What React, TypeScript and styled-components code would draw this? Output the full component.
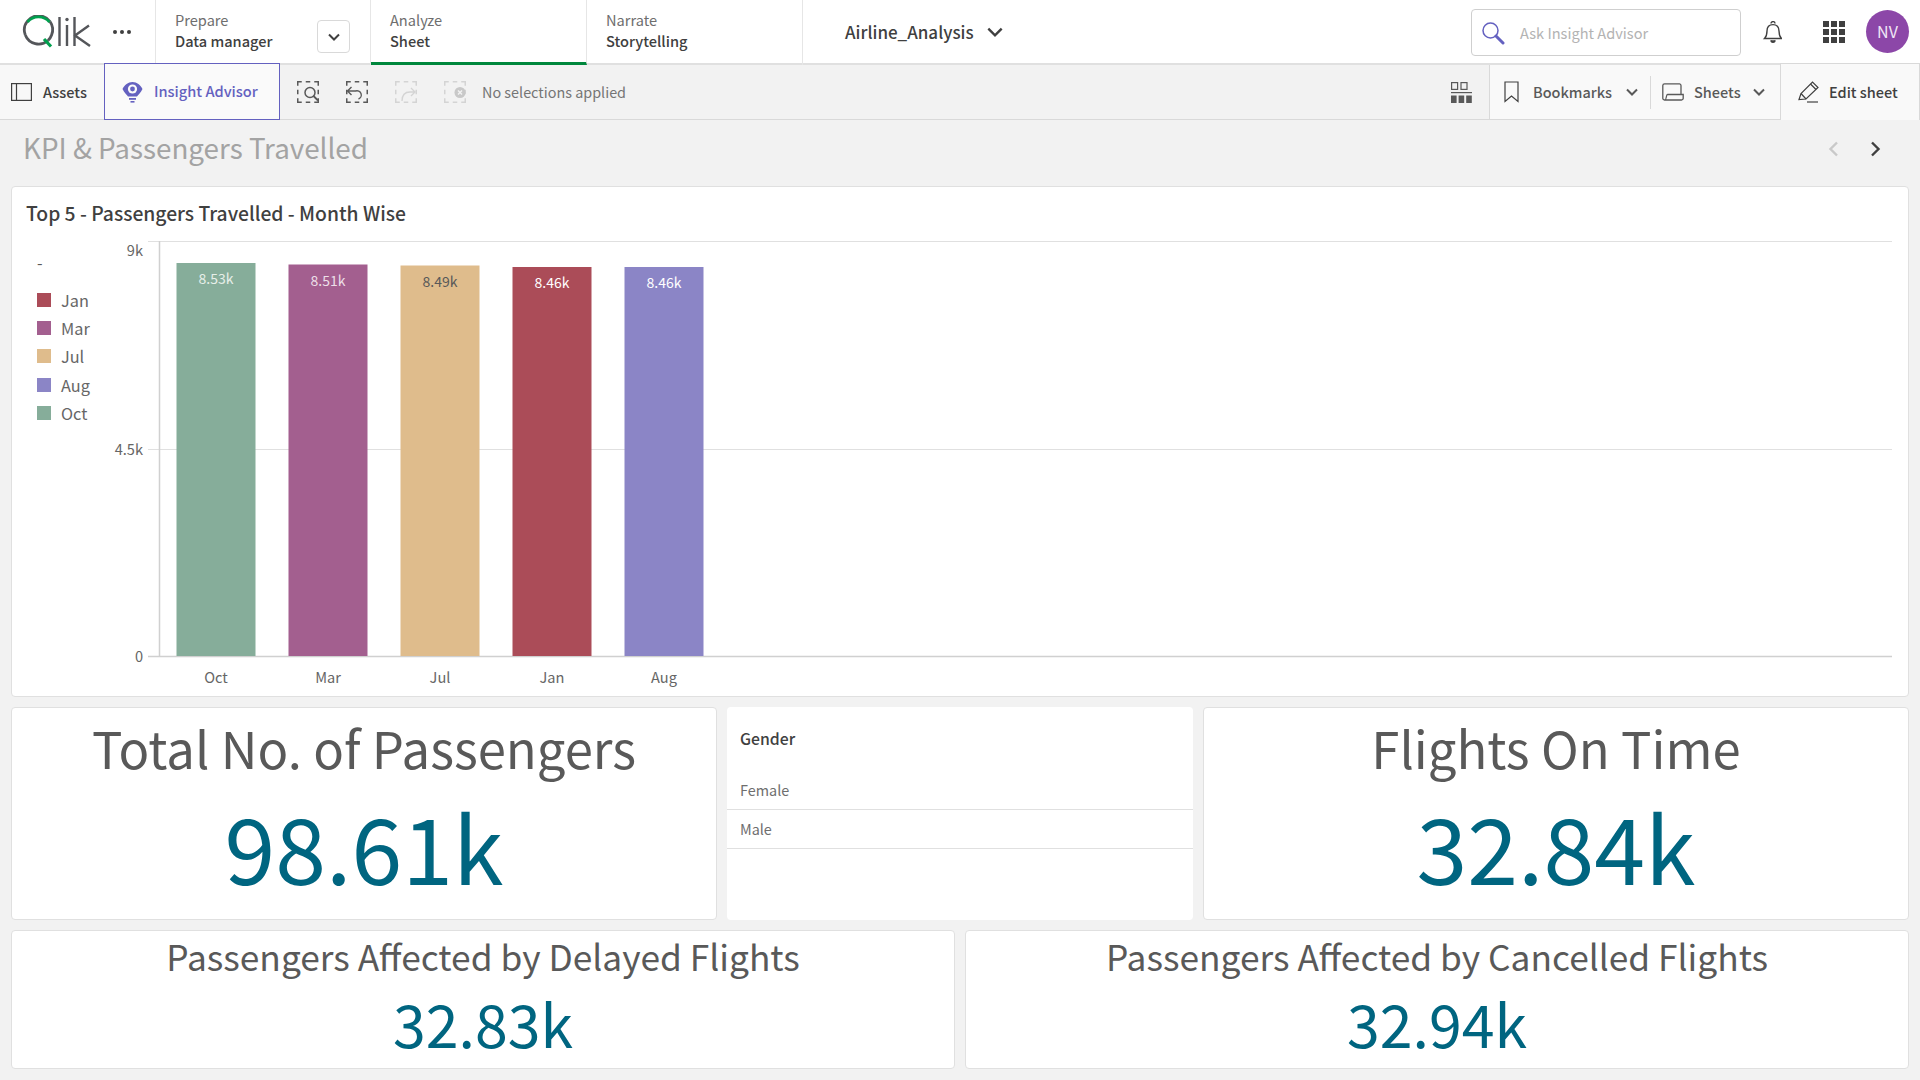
import React from "react";
import styled, { createGlobalStyle } from "styled-components";

const FONT = `"Noto Sans CJK SC", "Noto Sans", sans-serif`;

const Global = createGlobalStyle`
  html, body { margin: 0; padding: 0; background: #f2f2f2; }
  body { width: 1920px; height: 1080px; overflow: hidden; font-family: ${FONT}; color: #404040; }
  * { box-sizing: border-box; }
`;

const Page = styled.div`
  width: 1920px;
  height: 1080px;
  display: flex;
  flex-direction: column;
`;

/* ---------- top bar ---------- */
const TopBar = styled.header`
  height: 65px;
  background: #fff;
  border-bottom: 2px solid #e0e0e0;
  display: flex;
  align-items: stretch;
  flex: none;
`;
const LogoCell = styled.div`
  width: 156px;
  flex: none;
  border-right: 1px solid #e6e6e6;
  display: flex;
  align-items: center;
  padding-left: 22px;
  gap: 19px;
`;
const Dots = styled.div`
  display: flex;
  gap: 3px;
  span { width: 4px; height: 4px; border-radius: 50%; background: #404040; }
`;
const NavTab = styled.div<{ $w: number; $active?: boolean }>`
  width: ${(p) => p.$w}px;
  flex: none;
  position: relative;
  height: 65px;
  padding: 10px 0 0 19px;
  border-right: 1px solid #e6e6e6;
  border-bottom: ${(p) => (p.$active ? "3px solid #00873d" : "none")};
  display: flex;
  flex-direction: column;
`;
const NavLabel = styled.span`
  font-size: 14.6px;
  line-height: 20px;
  color: #6e6e6e;
`;
const NavValue = styled.span`
  font-size: 14.6px;
  line-height: 21px;
  font-weight: 500;
  color: #404040;
`;
const DropButton = styled.button`
  position: absolute;
  left: 161px;
  top: 20px;
  width: 33px;
  height: 33px;
  padding: 0;
  background: #fff;
  border: 1px solid #d9d9d9;
  border-radius: 4px;
  display: flex;
  align-items: center;
  justify-content: center;
`;
const AppName = styled.div`
  display: flex;
  align-items: center;
  gap: 13px;
  margin-left: 42px;
  font-size: 17px;
  line-height: 24px;
  font-weight: 500;
  color: #404040;
  flex: none;
`;
const Spacer = styled.div`
  flex: 1;
`;
const SearchBox = styled.div`
  width: 270px;
  height: 47px;
  margin-top: 9px;
  border: 1px solid #cfcfcf;
  border-radius: 4px;
  display: flex;
  align-items: center;
  padding-left: 9px;
  gap: 15px;
  font-size: 14.6px;
  line-height: 20px;
  color: #b3b3b3;
  flex: none;
`;
const TopIcons = styled.div`
  display: flex;
  align-items: center;
  margin-left: 21px;
  padding-right: 11px;
  gap: 41px;
  flex: none;
`;
const Avatar = styled.div`
  width: 43px;
  height: 43px;
  border-radius: 50%;
  background: #8c47a8;
  color: #f0e6f5;
  font-size: 16px;
  line-height: 43px;
  text-align: center;
  margin-left: -20px;
`;

/* ---------- toolbar ---------- */
const ToolBar = styled.div`
  height: 55px;
  flex: none;
  background: #f2f2f2;
  border-bottom: 1px solid #d9d9d9;
  display: flex;
  align-items: stretch;
`;
const ToolText = styled.span`
  margin-bottom: 2px;
`;
const AssetsBtn = styled.div`
  width: 104px;
  flex: none;
  display: flex;
  align-items: center;
  gap: 11px;
  padding-left: 11px;
  background: #f8f8f8;
  font-size: 14.5px;
  font-weight: 500;
  color: #404040;
`;
const InsightBtn = styled.div`
  width: 176px;
  height: 57px;
  margin-top: -2px;
  flex: none;
  position: relative;
  z-index: 1;
  display: flex;
  align-items: center;
  gap: 11px;
  padding-left: 17px;
  background: #fafafa;
  border: 1px solid #6461c0;
  font-size: 14.6px;
  font-weight: 500;
  color: #6461c0;
`;
const SelectionTools = styled.div`
  display: flex;
  align-items: center;
  gap: 27px;
  margin-left: 17px;
  flex: none;
`;
const NoSel = styled.span`
  font-size: 14.4px;
  line-height: 20px;
  color: #757575;
  margin-left: 16px;
  align-self: center;
  flex: none;
`;
const GridBtn = styled.div`
  display: flex;
  align-items: center;
  padding: 0 17px 0 0;
  flex: none;
`;
const RightGroup = styled.div`
  display: flex;
  align-items: center;
  background: #f9f9f9;
  border-left: 1px solid #d9d9d9;
  width: 291px;
  flex: none;
`;
const RightItem = styled.div<{ $w: number; $pad: number; $gap: number; $sep?: boolean }>`
  display: flex;
  align-items: center;
  height: 33px;
  width: ${(p) => p.$w}px;
  padding-left: ${(p) => p.$pad}px;
  gap: ${(p) => p.$gap}px;
  font-size: 14.5px;
  font-weight: 500;
  color: #595959;
  border-right: ${(p) => (p.$sep ? "1px solid #d9d9d9" : "none")};
`;
const ChevronSlot = styled.span`
  display: flex;
  margin-left: 2px;
`;
const EditBtn = styled.div`
  width: 140px;
  flex: none;
  height: 57px;
  margin-top: -2px;
  display: flex;
  align-items: center;
  gap: 10px;
  padding-left: 17px;
  background: #f9f9f9;
  border: 1px solid #d9d9d9;
  border-bottom: none;
  font-size: 14.5px;
  font-weight: 500;
  color: #404040;
`;

/* ---------- sheet title ---------- */
const TitleRow = styled.div`
  height: 66px;
  flex: none;
  display: flex;
  align-items: center;
  padding: 0 39px 10px 23px;
`;
const SheetTitle = styled.h1`
  margin: -2px 0 0;
  flex: 1;
  font-size: 27.8px;
  line-height: 36px;
  font-weight: 400;
  color: #a3a3a3;
`;
const Pager = styled.div`
  display: flex;
  align-items: center;
  gap: 31px;
  margin-top: 2px;
`;

/* ---------- dashboard ---------- */
const Dash = styled.main`
  padding: 0 11px;
  display: flex;
  flex-direction: column;
  gap: 10px;
`;
const Card = styled.section<{ $plain?: boolean }>`
  background: #fff;
  border-radius: 4px;
  border: ${(p) => (p.$plain ? "none" : "1px solid #e0e0e0")};
`;
const ChartCard = styled(Card)`
  height: 511px;
  padding: 13px 0 0 14px;
`;
const ChartTitle = styled.h2`
  margin: 0;
  font-size: 19.3px;
  line-height: 27px;
  font-weight: 500;
  color: #404040;
`;
const ChartBody = styled.div`
  display: flex;
  margin-left: -14px;
`;
const Legend = styled.div`
  width: 96px;
  flex: none;
  padding: 25px 0 0 25px;
  display: flex;
  flex-direction: column;
`;
const LegendHead = styled.div`
  height: 33.5px;
  font-size: 16px;
  line-height: 20px;
  color: #595959;
`;
const LegendRow = styled.div`
  display: flex;
  align-items: center;
  gap: 10px;
  height: 28.4px;
  font-size: 16.3px;
  color: #666;
`;
const Swatch = styled.span<{ $c: string }>`
  width: 14px;
  height: 14px;
  background: ${(p) => p.$c};
  flex: none;
`;
const KpiRow = styled.div<{ $cols: string; $h: number }>`
  display: grid;
  grid-template-columns: ${(p) => p.$cols};
  gap: 10px;
  height: ${(p) => p.$h}px;
`;
const Kpi = styled(Card)`
  display: flex;
  flex-direction: column;
  align-items: center;
  min-width: 0;
`;
const KpiLabel = styled.div<{ $size: number; $lh: number; $top: number; $sp?: number }>`
  margin-top: ${(p) => p.$top}px;
  font-size: ${(p) => p.$size}px;
  line-height: ${(p) => p.$lh}px;
  letter-spacing: ${(p) => p.$sp ?? 0}px;
  color: #595959;
  white-space: nowrap;
`;
const KpiValue = styled.div<{ $size: number; $lh: number }>`
  font-size: ${(p) => p.$size}px;
  line-height: ${(p) => p.$lh}px;
  color: #006580;
  white-space: nowrap;
`;
const FilterCard = styled(Card)`
  display: flex;
  flex-direction: column;
`;
const FilterTitle = styled.div`
  height: 64px;
  padding: 20px 0 0 13px;
  font-size: 15.8px;
  line-height: 24px;
  font-weight: 500;
  color: #404040;
`;
const FilterItem = styled.div`
  height: 39px;
  padding-left: 13px;
  border-bottom: 1px solid #e0e0e0;
  font-size: 14.4px;
  line-height: 38px;
  color: #6e6e6e;
`;

/* ---------- icons ---------- */
const QlikLogo = () => (
  <svg width="72" height="34" viewBox="0 0 72 34">
    <path d="M3.3 20 A14.3 14.3 0 0 0 26 25.5" fill="none" stroke="#54565a" strokeWidth="2.8" />
    <path d="M26 25.5 A14.3 14.3 0 0 0 29.6 20 A14.3 14.3 0 0 0 28 6.5" fill="none" stroke="#54565a" strokeWidth="2.8" />
    <path d="M3.3 20 A14.3 14.3 0 0 1 5.5 6 A14.3 14.3 0 0 1 28 6.5" fill="none" stroke="#54565a" strokeWidth="2.8" />
    <path d="M5.5 7 A14.3 14.3 0 0 1 27.5 7" fill="none" stroke="#00a04e" strokeWidth="2.8" />
    <path d="M22 24 L29 31.5" fill="none" stroke="#00a04e" strokeWidth="3.2" />
    <path d="M37.5 2 V31 M45 10 V31 M52.5 2 V31 M67 10.5 L53 20.5 L68 31" fill="none" stroke="#54565a" strokeWidth="2.4" />
    <circle cx="45" cy="4.5" r="1.7" fill="#54565a" />
  </svg>
);
const Chevron = ({ size = 12, w = 2, c = "#404040" }: { size?: number; w?: number; c?: string }) => (
  <svg width={size} height={size} viewBox="0 0 12 12" fill="none">
    <path d="M1 3.5 L6 8.5 L11 3.5" stroke={c} strokeWidth={w * 12 / size} />
  </svg>
);
const SearchIcon = () => (
  <svg width="24" height="24" viewBox="0 0 24 24" fill="none" stroke="#6461c0" strokeWidth="1.5">
    <circle cx="9.5" cy="9.5" r="7.5" />
    <path d="M15 15 L22 22" strokeWidth="3" strokeLinecap="round" />
  </svg>
);
const BellIcon = () => (
  <svg width="20" height="22" viewBox="-1 0 20 22" fill="none" stroke="#404040" strokeWidth="1.4">
    <path d="M1.5 17.5 H18.5 C16.5 15.5 16 13.5 16 10 C16 6 13.8 3.6 10 3.6 C6.2 3.6 4 6 4 10 C4 13.5 3.5 15.5 1.5 17.5 Z" />
    <path d="M8 2.6 a2 2 0 0 1 4 0" />
    <path d="M8 19.3 a2 2 0 0 0 4 0" fill="#404040" />
  </svg>
);
const AppsIcon = () => (
  <svg width="22" height="22" viewBox="0 0 22 22" fill="#404040">
    {[0, 8, 16].flatMap((y) =>
      [0, 8, 16].map((x) => <rect key={`${x}-${y}`} x={x} y={y} width="6" height="6" />)
    )}
  </svg>
);
const PanelIcon = () => (
  <svg width="21" height="18" viewBox="0 0 21 18" fill="none" stroke="#404040" strokeWidth="1.2">
    <rect x="0.6" y="0.6" width="19.8" height="16.8" />
    <path d="M5.5 0.6 V17.4" />
  </svg>
);
const BulbEye = () => (
  <svg width="21" height="22" viewBox="0 0 21 22" fill="#6461c0">
    <path d="M10.5 1 C15 1 18.5 4 20.5 8 C18.5 12 16 14 15 15.5 H6 C5 14 2.5 12 0.5 8 C2.5 4 6 1 10.5 1 Z" />
    <circle cx="10.5" cy="8" r="4.6" fill="#fafafa" />
    <circle cx="10.5" cy="8" r="2.4" />
    <rect x="7" y="17" width="7" height="1.8" />
    <rect x="8.5" y="20" width="4" height="1.6" />
  </svg>
);
const Dashed = ({ c, children }: { c: string; children: React.ReactNode }) => (
  <svg width="22" height="22" viewBox="0 0 22 22" fill="none" stroke={c}>
    <rect x="0.75" y="0.75" width="20.5" height="20.5" strokeWidth="1.5" strokeDasharray="8 4 4.5 4" strokeDashoffset="4" />
    {children}
  </svg>
);
const GridIcon = () => (
  <svg width="21" height="21" viewBox="0 0 21 21" fill="#595959">
    <rect x="0.6" y="0.6" width="6" height="6.8" fill="none" stroke="#595959" strokeWidth="1.2" />
    <rect x="10" y="0.6" width="6" height="6.8" fill="none" stroke="#595959" strokeWidth="1.2" />
    <rect x="0" y="10" width="21" height="1.2" />
    <rect x="0" y="13.5" width="5.6" height="7.5" />
    <rect x="7.6" y="13.5" width="5.6" height="7.5" />
    <rect x="15.2" y="13.5" width="5.6" height="7.5" />
  </svg>
);
const BookmarkIcon = () => (
  <svg width="15" height="22" viewBox="0 0 15 22" fill="none" stroke="#404040" strokeWidth="1.2">
    <path d="M1 1 H14 V20.5 L7.5 15 L1 20.5 Z" />
  </svg>
);
const SheetsIcon = () => (
  <svg width="22" height="18" viewBox="0 0 22 18" fill="none" stroke="#595959" strokeWidth="1.3">
    <path d="M3 17 H2.5 A1.8 1.8 0 0 1 0.8 15 V2.5 A1.8 1.8 0 0 1 2.6 0.8 H17.5 A1.8 1.8 0 0 1 19 2.5 V11.5 H5.5 C4 11.5 4.5 17 3 17 H19.5 A1.8 1.8 0 0 0 21.2 15 V11.5 H19" />
  </svg>
);
const PencilIcon = () => (
  <svg width="21" height="22" viewBox="0 0 21 22" fill="none" stroke="#404040" strokeWidth="1.2">
    <path d="M1 18.5 L3 12.5 L14.5 1 L20 6.5 L8 18 Z" />
    <path d="M3 12.5 L8 18 M12.5 3 L18 8.5" />
    <path d="M9 21 H20" />
  </svg>
);

/* ---------- chart ---------- */
type Bar = { m: string; v: string; top: number; x: number; c: string; lab: string };
const bars: Bar[] = [
  { m: "Oct", v: "8.53k", top: 263, x: 176.5, c: "#86ad9a", lab: "#e6efe9" },
  { m: "Mar", v: "8.51k", top: 264.5, x: 288.5, c: "#a35f8f", lab: "#ecdfe8" },
  { m: "Jul", v: "8.49k", top: 265.5, x: 400.5, c: "#dfbc8c", lab: "#595959" },
  { m: "Jan", v: "8.46k", top: 267, x: 512.5, c: "#ab4c58", lab: "#fff" },
  { m: "Aug", v: "8.46k", top: 267, x: 624.5, c: "#8b85c6", lab: "#fff" },
];
const legend = [
  ["Jan", "#ab4c58"],
  ["Mar", "#a35f8f"],
  ["Jul", "#dfbc8c"],
  ["Aug", "#8b85c6"],
  ["Oct", "#86ad9a"],
];
const OX = 108;
const OY = 227;
const Plot = () => (
  <svg width="1800" height="469" viewBox={`${OX} ${OY} 1800 469`} fontFamily={FONT} fontSize="14.6" fill="#666">
    <g stroke="#e0e0e0" strokeWidth="1">
      <path d="M148 241.5 H1892 M148 449.5 H1892" />
    </g>
    <path d="M159.5 241 V656.5 M148 656.5 H1892" stroke="#d0d0d0" strokeWidth="1.5" fill="none" />
    <g textAnchor="end">
      <text x="143" y="256">9k</text>
      <text x="143" y="455">4.5k</text>
      <text x="143" y="662">0</text>
    </g>
    {bars.map((b) => (
      <g key={b.m}>
        <rect x={b.x} y={b.top} width="79" height={656 - b.top} fill={b.c} />
        <text x={b.x + 39.5} y={b.top + 21} textAnchor="middle" fontSize="14" fill={b.lab}>{b.v}</text>
        <text x={b.x + 39.5} y="683" textAnchor="middle">{b.m}</text>
      </g>
    ))}
  </svg>
);

export default function App() {
  return (
    <Page>
      <Global />
      <TopBar>
        <LogoCell>
          <QlikLogo />
          <Dots><span /><span /><span /></Dots>
        </LogoCell>
        <NavTab $w={215}>
          <NavLabel>Prepare</NavLabel>
          <NavValue>Data manager</NavValue>
          <DropButton aria-label="Open"><Chevron size={12} w={2} /></DropButton>
        </NavTab>
        <NavTab $w={216} $active>
          <NavLabel>Analyze</NavLabel>
          <NavValue>Sheet</NavValue>
        </NavTab>
        <NavTab $w={216}>
          <NavLabel>Narrate</NavLabel>
          <NavValue>Storytelling</NavValue>
        </NavTab>
        <AppName>
          Airline_Analysis
          <Chevron size={16} w={2.4} />
        </AppName>
        <Spacer />
        <SearchBox>
          <SearchIcon />
          Ask Insight Advisor
        </SearchBox>
        <TopIcons>
          <BellIcon />
          <AppsIcon />
          <Avatar>NV</Avatar>
        </TopIcons>
      </TopBar>

      <ToolBar>
        <AssetsBtn><PanelIcon /><ToolText>Assets</ToolText></AssetsBtn>
        <InsightBtn><BulbEye /><ToolText>Insight Advisor</ToolText></InsightBtn>
        <SelectionTools>
          <Dashed c="#595959">
            <circle cx="13" cy="11.5" r="5" strokeWidth="1.5" fill="#f2f2f2" />
            <path d="M16.5 15 L21 19.5" strokeWidth="1.8" />
          </Dashed>
          <Dashed c="#595959">
            <path d="M1.5 10 H9.5 A4 4 0 0 1 12.5 18 M5.5 6 L1.5 10 L5.5 14" strokeWidth="1.4" />
          </Dashed>
          <Dashed c="#d4d4d4">
            <path d="M7 20 C7 14 10 11 15 11 H20 M16 7 L20 11 L16 15" strokeWidth="1.3" />
          </Dashed>
          <Dashed c="#d4d4d4">
            <circle cx="16" cy="11.5" r="5.5" fill="#c8c8c8" stroke="none" />
            <path d="M14 9.5 L18 13.5 M18 9.5 L14 13.5" stroke="#f2f2f2" strokeWidth="1.4" />
          </Dashed>
        </SelectionTools>
        <NoSel>No selections applied</NoSel>
        <Spacer />
        <GridBtn><GridIcon /></GridBtn>
        <RightGroup>
          <RightItem $w={161} $pad={14} $gap={14} $sep>
            <BookmarkIcon />
            <ToolText>Bookmarks</ToolText>
            <Chevron size={12} w={2} c="#595959" />
          </RightItem>
          <RightItem $w={129} $pad={11} $gap={10}>
            <SheetsIcon />
            <ToolText>Sheets</ToolText>
            <ChevronSlot><Chevron size={12} w={2} c="#595959" /></ChevronSlot>
          </RightItem>
        </RightGroup>
        <EditBtn><PencilIcon /><ToolText>Edit sheet</ToolText></EditBtn>
      </ToolBar>

      <TitleRow>
        <SheetTitle>KPI &amp; Passengers Travelled</SheetTitle>
        <Pager>
          <svg width="11" height="16" viewBox="0 0 11 16" fill="none" stroke="#c9c9c9" strokeWidth="2.4"><path d="M9 1.5 L2.5 8 L9 14.5" /></svg>
          <svg width="11" height="16" viewBox="0 0 11 16" fill="none" stroke="#404040" strokeWidth="2.4"><path d="M2 1.5 L8.5 8 L2 14.5" /></svg>
        </Pager>
      </TitleRow>

      <Dash>
        <ChartCard>
          <ChartTitle>Top 5 - Passengers Travelled - Month Wise</ChartTitle>
          <ChartBody>
            <Legend>
              <LegendHead>-</LegendHead>
              {legend.map(([m, c]) => (
                <LegendRow key={m}><Swatch $c={c} />{m}</LegendRow>
              ))}
            </Legend>
            <Plot />
          </ChartBody>
        </ChartCard>

        <KpiRow $cols="706px 466px 706px" $h={213}>
          <Kpi>
            <KpiLabel $size={50.8} $lh={68} $top={5}>Total No. of Passengers</KpiLabel>
            <KpiValue $size={91.5} $lh={128}>98.61k</KpiValue>
          </Kpi>
          <FilterCard $plain>
            <FilterTitle>Gender</FilterTitle>
            <FilterItem>Female</FilterItem>
            <FilterItem>Male</FilterItem>
          </FilterCard>
          <Kpi>
            <KpiLabel $size={50.8} $lh={68} $top={5}>Flights On Time</KpiLabel>
            <KpiValue $size={91.5} $lh={128}>32.84k</KpiValue>
          </Kpi>
        </KpiRow>

        <KpiRow $cols="1fr 1fr" $h={139}>
          <Kpi>
            <KpiLabel $size={35.3} $lh={50} $top={0}>Passengers Affected by Delayed Flights</KpiLabel>
            <KpiValue $size={59} $lh={84}>32.83k</KpiValue>
          </Kpi>
          <Kpi>
            <KpiLabel $size={35.3} $lh={50} $top={0}>Passengers Affected by Cancelled Flights</KpiLabel>
            <KpiValue $size={59} $lh={84}>32.94k</KpiValue>
          </Kpi>
        </KpiRow>
      </Dash>
    </Page>
  );
}
